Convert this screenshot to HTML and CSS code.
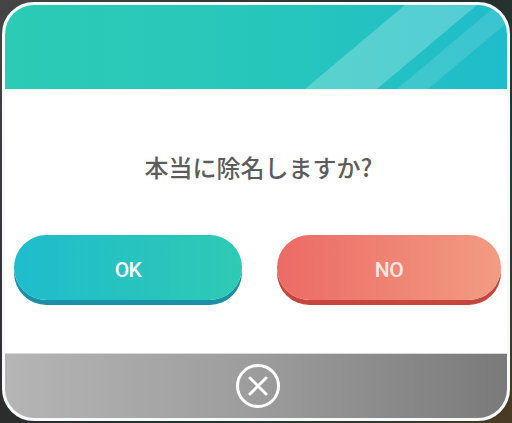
FILE: index.html
```html
<!DOCTYPE html>
<html lang="ja">
<head>
	<meta charset="UTF-8">
	<title>除名確認</title>
	<link rel="stylesheet" href="styles.css">
</head>
<body>
<!-- 確認ダイアログ -->
	<div class="dialog">
		<div class="dialog-head">
			<svg class="stripes" width="502" height="84" viewBox="0 0 502 84">
				<polygon points="300,84 372,84 472,0 400,0" fill="rgba(255,255,255,0.24)"/>
				<polygon points="392,84 423,84 523,0 492,0" fill="rgba(255,255,255,0.13)"/>
			</svg>
		</div>
		<div class="dialog-body">
			<p class="message">本当に除名しますか?</p>
			<div class="actions">
				<button class="btn btn-ok">OK</button>
				<button class="btn btn-no">NO</button>
			</div>
		</div>
		<div class="dialog-foot">
			<svg class="close" width="46" height="46" viewBox="0 0 46 46">
				<circle cx="23" cy="23" r="20.5" fill="none" stroke="#fff" stroke-width="3"/>
				<path d="M15 15 L31 31 M31 15 L15 31" stroke="#fff" stroke-width="3" stroke-linecap="round"/>
			</svg>
		</div>
	</div>
</body>
</html>
```

FILE: styles.css
```css
*{
	margin:0;
	padding:0;
	box-sizing: border-box;
}
body{
	width: 512px;
	height: 423px;
	overflow: hidden;
	background: linear-gradient(135deg, #454545 0%, #2c2c2c 45%, #1d3a33 70%, #4a3a22 100%);
	font-family: "Noto Sans", "Noto Sans CJK JP", sans-serif;
}
.dialog{
	width: 508px;
	height: 419px;
	margin: 2px;
	border: 3px solid #f6fafa;
	border-radius: 32px;
	overflow: hidden;
	display: flex;
	flex-direction: column;
	background-color: #fff;
}
/* 上の帯 */
.dialog-head{
	position: relative;
	height: 84px;
	background: linear-gradient(to right, #2ccbb5, #27c6bc 55%, #1fbccb);
}
.stripes{
	position: absolute;
	left: 0;
	top: 0;
}
.dialog-body{
	height: 264px;
	padding: 66px 0 0 9px;
}
.message{
	text-align: center;
	font-family: "Noto Sans CJK JP", sans-serif;
	font-size: 24px;
	line-height: 24px;
	font-weight: 500;
	color: #5c5c5c;
	padding-right: 4px;
}
.actions{
	display: flex;
	gap: 35px;
	margin-top: 56px;
}
.btn{
	height: 65px;
	border: none;
	border-radius: 33px;
	font-family: Roboto, "Noto Sans", sans-serif;
	font-size: 21px;
	font-weight: 500;
	letter-spacing: -0.5px;
	padding-top: 4px;
	cursor: pointer;
}
.btn-ok{
	width: 228px;
	color: #fff;
	background: linear-gradient(to right, #1fbccd, #2ecab3);
	box-shadow: 0 5px 0 #1a8fa5;
}
.btn-no{
	width: 224px;
	color: #fde6e1;
	background: linear-gradient(to right, #ec6a65, #f29c82);
	box-shadow: 0 5px 0 #c6463f;
}
/* 下の閉じるバー */
.dialog-foot{
	flex: 1;
	display: flex;
	align-items: center;
	justify-content: center;
	padding-left: 4px;
	border-top: 1px solid #d8d8d8;
	background: linear-gradient(to right, #b5b5b5, #9c9c9c 50%, #7a7a7a);
}
```
